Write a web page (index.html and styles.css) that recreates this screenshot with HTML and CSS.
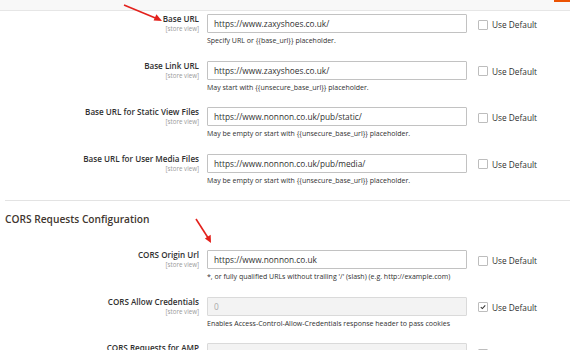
FILE: index.html
```html
<!DOCTYPE html>
<html lang="en">
<head>
    <meta charset="UTF-8">
    <meta name="viewport" content="width=device-width, initial-scale=1.0">
    <title>Stores Configuration - Web</title>
    <link rel="stylesheet" href="styles.css">
</head>
<body>
    <div class="page-top"><span class="page-top-accent"></span></div>

    <!-- Base URLs (Secure) -->
    <div class="fieldset">
        <div class="row">
            <div class="label"><span class="label-text">Base URL</span><span class="scope">[store view]</span></div>
            <div class="value">
                <input class="input" type="text" value="https://www.zaxyshoes.co.uk/">
                <p class="note">Specify URL or {{base_url}} placeholder.</p>
            </div>
            <label class="use-default"><span class="cb"></span>Use Default</label>
        </div>
        <div class="row">
            <div class="label"><span class="label-text">Base Link URL</span><span class="scope">[store view]</span></div>
            <div class="value">
                <input class="input" type="text" value="https://www.zaxyshoes.co.uk/">
                <p class="note">May start with {{unsecure_base_url}} placeholder.</p>
            </div>
            <label class="use-default"><span class="cb"></span>Use Default</label>
        </div>
        <div class="row">
            <div class="label"><span class="label-text">Base URL for Static View Files</span><span class="scope">[store view]</span></div>
            <div class="value">
                <input class="input" type="text" value="https://www.nonnon.co.uk/pub/static/">
                <p class="note">May be empty or start with {{unsecure_base_url}} placeholder.</p>
            </div>
            <label class="use-default"><span class="cb"></span>Use Default</label>
        </div>
        <div class="row">
            <div class="label"><span class="label-text">Base URL for User Media Files</span><span class="scope">[store view]</span></div>
            <div class="value">
                <input class="input" type="text" value="https://www.nonnon.co.uk/pub/media/">
                <p class="note">May be empty or start with {{unsecure_base_url}} placeholder.</p>
            </div>
            <label class="use-default"><span class="cb"></span>Use Default</label>
        </div>
    </div>

    <!-- CORS -->
    <div class="section">
        <div class="divider"></div>
        <h2 class="section-title">CORS Requests Configuration</h2>
        <div class="row">
            <div class="label"><span class="label-text">CORS Origin Url</span><span class="scope">[store view]</span></div>
            <div class="value">
                <input class="input" type="text" value="https://www.nonnon.co.uk">
                <p class="note">*, or fully qualified URLs without trailing '/' (slash) (e.g. http://example.com)</p>
            </div>
            <label class="use-default"><span class="cb"></span>Use Default</label>
        </div>
        <div class="row">
            <div class="label"><span class="label-text">CORS Allow Credentials</span><span class="scope">[store view]</span></div>
            <div class="value">
                <input class="input" type="text" value="0" disabled>
                <p class="note">Enables Access-Control-Allow-Credentials response header to pass cookies</p>
            </div>
            <label class="use-default"><span class="cb checked"><svg viewBox="0 0 10 10"><path d="M2.2 5.2 L4.2 7 L7.8 3" fill="none" stroke="#333" stroke-width="1.3"/></svg></span>Use Default</label>
        </div>
        <div class="row">
            <div class="label"><span class="label-text">CORS Requests for AMP</span><span class="scope">[store view]</span></div>
            <div class="value">
                <input class="input" type="text" value="" disabled>
            </div>
            <label class="use-default"><span class="cb checked"><svg viewBox="0 0 10 10"><path d="M2.2 5.2 L4.2 7 L7.8 3" fill="none" stroke="#333" stroke-width="1.3"/></svg></span>Use Default</label>
        </div>
    </div>

    <!-- red annotation arrows drawn over the page -->
    <svg class="arrows" width="570" height="350" viewBox="0 0 570 350">
        <g stroke="#e3211c" stroke-width="1.6" fill="#e3211c">
            <line x1="124" y1="5" x2="156" y2="18.3"/>
            <polygon points="162,21 153.6,20.6 156.4,14.2" stroke="none"/>
            <line x1="196" y1="219" x2="208" y2="237.7"/>
            <polygon points="211,243 204.9,238.5 210.7,234.8" stroke="none"/>
        </g>
    </svg>
</body>
</html>
```

FILE: styles.css
```css
html {
    overflow: hidden;
}
body {
    margin: 0;
    font-family: "Open Sans", "Liberation Sans", Arial, sans-serif;
    color: #303030;
    background: #fff;
    position: relative;
}
.page-top {
    height: 10px;
    background: #f8f8f8;
    border-bottom: 1px solid #e6e6e6;
    display: flex;
    justify-content: flex-end;
}
.page-top-accent {
    width: 16px;
    height: 2px;
    background: #eb5202;
}
.fieldset {
    padding-top: 3px;
}
.row {
    display: grid;
    grid-template-columns: 207px 260px auto;
    margin-bottom: 14.5px;
}
.label {
    display: flex;
    flex-direction: column;
    align-items: flex-end;
    padding-right: 8px;
}
.label-text {
    font-size: 8.1px;
    font-weight: 600;
    line-height: 10px;
    color: #303030;
}
.scope {
    font-size: 6.2px;
    line-height: 8px;
    color: #999;
    margin-top: 1px;
}
.input {
    display: block;
    box-sizing: border-box;
    width: 260px;
    height: 19px;
    margin: 0;
    padding: 0 6px;
    border: 1px solid #c2c2c2;
    border-radius: 1px;
    font-family: inherit;
    font-size: 8.3px;
    color: #303030;
    background: #fff;
    outline: none;
}
.input:disabled {
    background: #f3f3f3;
    border-color: #dadada;
    color: #aaa;
}
.note {
    margin: 3px 0 0;
    font-size: 7px;
    line-height: 10px;
    color: #303030;
    white-space: nowrap;
}
.use-default {
    display: flex;
    align-items: center;
    height: 19px;
    padding-top: 2px;
    box-sizing: border-box;
    padding-left: 11px;
    font-size: 8.3px;
    color: #303030;
}
.cb {
    width: 10px;
    height: 10px;
    box-sizing: border-box;
    border: 1px solid #bdbdbd;
    border-radius: 1px;
    background: #fff;
    margin-right: 4px;
    display: flex;
    align-items: center;
    justify-content: center;
}
.cb svg {
    width: 8px;
    height: 8px;
}
.divider {
    margin-left: 5px;
    border-top: 1px solid #e3e3e3;
    margin-top: 1px;
}
.section-title {
    margin: 11px 0 24px 5px;
    font-size: 10.2px;
    line-height: 14px;
    font-weight: 600;
    color: #41362f;
}
.arrows {
    position: absolute;
    top: 0;
    left: 0;
    pointer-events: none;
}
```
